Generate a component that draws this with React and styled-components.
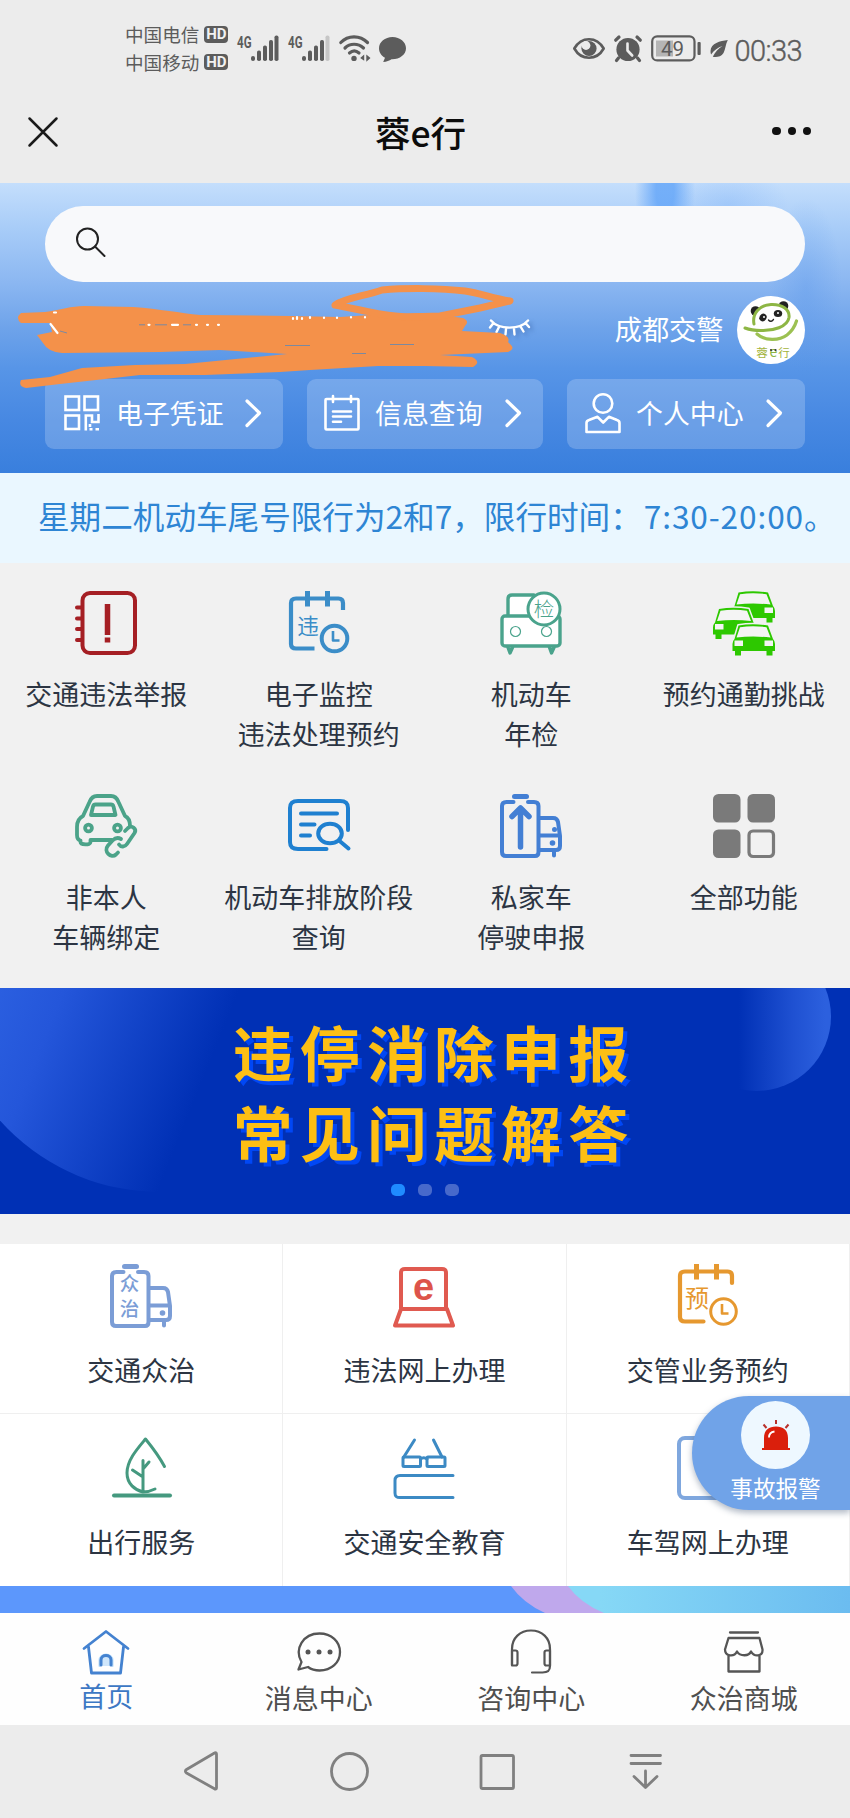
import React from "react";
import styled, { createGlobalStyle } from "styled-components";

const FONT = '"Noto Sans CJK SC", "Noto Sans", sans-serif';

const Global = createGlobalStyle`
  * { box-sizing: border-box; }
  body { margin: 0; background: #ececec; font-family: ${FONT}; }
  svg { display: block; overflow: visible; flex: none; }
`;

const Screen = styled.div`
  width: 850px;
  height: 1818px;
  display: flex;
  flex-direction: column;
  overflow: hidden;
  background: #f1f1f1;
`;

/* ---------- status bar ---------- */
const StatusBar = styled.div`
  height: 98px;
  flex: none;
  display: flex;
  justify-content: space-between;
  padding: 0 48px 0 125px;
  background: #ececec;
  color: #5c5c5c;
`;
const StatusLeft = styled.div`
  display: flex;
  align-items: flex-start;
`;
const Carriers = styled.div`
  display: flex;
  flex-direction: column;
  padding-top: 20px;
  margin-right: 9px;
`;
const Carrier = styled.div`
  height: 27.5px;
  display: flex;
  align-items: center;
  gap: 5px;
  font-size: 18.6px;
  line-height: 27px;
  white-space: nowrap;
`;
const HdBadge = styled.span`
  width: 24px;
  height: 16.5px;
  margin-top: 1px;
  border-radius: 4px;
  background: #5c5c5c;
  color: #f2f2f2;
  font: 700 15px/17px Roboto, sans-serif;
  text-align: center;
`;
const StatusIcons = styled.div`
  display: flex;
  padding-top: 34px;
  gap: ${(p) => p.$gap}px;
`;
const Clock = styled.div`
  padding-top: 33px;
  margin-left: -2px;
  font: 300 29px/36px Roboto, sans-serif;
  -webkit-text-stroke: 0.4px #5c5c5c;
  letter-spacing: -0.6px;
  white-space: nowrap;
`;

/* ---------- title bar ---------- */
const TitleBar = styled.div`
  height: 85px;
  flex: none;
  display: grid;
  grid-template-columns: 200px 1fr 200px;
  align-items: start;
  padding: 0 39px 0 28px;
  background: #ececec;
`;
const CloseSlot = styled.div`
  padding-top: 19px;
`;
const Title = styled.h1`
  margin: 0;
  padding-top: 8px;
  padding-left: 2px;
  text-align: center;
  font-size: 35.5px;
  line-height: 52px;
  font-weight: 500;
  color: #0c0c0c;
`;
const MoreSlot = styled.div`
  padding-top: 29px;
  display: flex;
  justify-content: flex-end;
  gap: 7px;
`;
const MoreDot = styled.span`
  width: 8.2px;
  height: 8.2px;
  border-radius: 50%;
  background: #111;
`;

/* ---------- hero ---------- */
const Hero = styled.section`
  position: relative;
  height: 290px;
  flex: none;
  padding: 23px 45px 0;
  background:
    radial-gradient(ellipse 30px 70px at 665px 8px, rgba(90, 160, 248, 0.75) 30%, transparent),
    radial-gradient(ellipse 60px 40px at 728px 22px, rgba(120, 175, 248, 0.35), transparent),
    radial-gradient(ellipse 36px 90px at 806px 105px, rgba(80, 145, 235, 0.3), transparent),
    linear-gradient(180deg, #c4defc 0%, #a9cdf8 15%, #8ab6f1 35%, #6ea3ea 50%, #5795e7 64%, #4788e2 82%, #397fdd 100%);
`;
const SearchBox = styled.div`
  height: 75.5px;
  border-radius: 38px;
  padding: 21px 31px;
  background: #f8f9fb;
`;
const UserRow = styled.div`
  height: 97px;
  display: flex;
  justify-content: flex-end;
  align-items: flex-start;
  padding-top: 14.5px;
`;
const LashSlot = styled.div`
  padding-top: 21.5px;
  margin-right: 85px;
`;
const OrgName = styled.div`
  padding-top: 12.5px;
  margin-right: 13.5px;
  font-size: 27.2px;
  line-height: 38px;
  color: #fff;
`;
const Avatar = styled.div`
  width: 68px;
  height: 68px;
  border-radius: 50%;
  background: #fff;
`;
const QuickRow = styled.div`
  display: grid;
  grid-template-columns: 238px 236px 238px;
  gap: 24px;
`;
const QuickButton = styled.div`
  height: 70px;
  border-radius: 9px;
  background: rgba(255, 255, 255, 0.2);
  display: flex;
  align-items: center;
  padding: 0 0 1.5px ${(p) => p.$pad}px;
  color: #fff;
`;
const QuickLabel = styled.span`
  margin-left: ${(p) => p.$gap}px;
  width: ${(p) => 144.5 - p.$gap}px;
  font-size: 26.9px;
  line-height: 38px;
  white-space: nowrap;
`;
const Scribble = styled.svg`
  position: absolute;
  left: 0;
  top: 0;
  pointer-events: none;
`;

/* ---------- notice ---------- */
const Notice = styled.div`
  height: 89.5px;
  flex: none;
  padding: 19px 0 0 38px;
  background: #eaf7ff;
`;
const NoticeText = styled.div`
  white-space: nowrap;
  font-size: 31.6px;
  line-height: 46px;
  color: #2e85d4;
`;
const Hours = styled.span`
  margin-left: 2px;
  letter-spacing: 0.9px;
`;

/* ---------- services ---------- */
const ServiceGrid = styled.section`
  height: 425.5px;
  flex: none;
  display: grid;
  grid-template-columns: repeat(4, 212.5px);
  grid-auto-rows: 203px;
  padding-top: 28.5px;
  background: #f1f1f1;
`;
const Service = styled.div`
  display: flex;
  flex-direction: column;
  align-items: center;
`;
const Label = styled.div`
  margin-top: ${(p) => p.$top}px;
  text-align: center;
  white-space: pre;
  font-size: 27px;
  line-height: 40.3px;
  color: ${(p) => p.$color || "#2c3543"};
`;

/* ---------- banner ---------- */
const Banner = styled.section`
  position: relative;
  height: 226px;
  flex: none;
  overflow: hidden;
  display: flex;
  flex-direction: column;
  align-items: center;
  padding-top: 22.5px;
  background: #0030b5;
`;
const Orb = styled.div`
  position: absolute;
  left: ${(p) => p.$x}px;
  top: ${(p) => p.$y}px;
  width: ${(p) => p.$size}px;
  height: ${(p) => p.$size}px;
  border-radius: 50%;
  background: ${(p) => p.$fill};
`;
const BannerLine = styled.div`
  position: relative;
  height: 80px;
  padding-left: 18px;
  font-size: 60px;
  line-height: 80px;
  font-weight: 700;
  letter-spacing: 7.1px;
  color: #fdbf14;
  text-shadow: 4px 4px 0 #0047f5;
  white-space: nowrap;
`;
const Dots = styled.div`
  position: relative;
  display: flex;
  gap: 13px;
  margin-top: 13px;
`;
const Dot = styled.span`
  width: 14px;
  height: 12px;
  border-radius: 5px;
  background: ${(p) => (p.$on ? "#1f8bff" : "#4769cb")};
`;

/* ---------- tiles ---------- */
const TileArea = styled.section`
  position: relative;
  height: 372px;
  flex: none;
  padding-top: 29.5px;
`;
const TileGrid = styled.div`
  display: grid;
  grid-template-columns: 283.3px 283.3px 283.4px;
  grid-template-rows: 170px 172.5px;
`;
const Tile = styled.div`
  display: flex;
  flex-direction: column;
  align-items: center;
  padding-top: ${(p) => p.$top}px;
  background: #fff;
  border-right: 1.5px solid #efefef;
  border-bottom: ${(p) => (p.$line ? "1.5px solid #efefef" : "0")};
`;
const AlarmTab = styled.div`
  position: absolute;
  right: 0;
  top: 182px;
  width: 158px;
  height: 114px;
  border-radius: 57px 0 0 57px;
  background: #70a3e8;
  box-shadow: 0 3px 6px rgba(60, 80, 110, 0.4);
  display: flex;
  flex-direction: column;
  align-items: center;
  padding: 5px 0 0 9px;
`;
const AlarmDisc = styled.div`
  width: 69px;
  height: 68px;
  border-radius: 50%;
  background: #eef8ff;
  display: flex;
  justify-content: center;
  padding-top: 19px;
`;
const AlarmText = styled.div`
  font-size: 22.6px;
  line-height: 32px;
  margin-top: 2.5px;
  color: #fff;
`;

const Strip = styled.div`
  height: 27px;
  flex: none;
  background: linear-gradient(90deg, #86d8f6 600px, #6bbcf0 850px);
`;

/* ---------- bottom tabs ---------- */
const TabBar = styled.nav`
  height: 112px;
  flex: none;
  display: grid;
  grid-template-columns: repeat(4, 212.5px);
  background: #fefefe;
`;
const Tab = styled.div`
  display: flex;
  flex-direction: column;
  align-items: center;
  padding-top: 14px;
`;
const SystemBar = styled.div`
  height: 93px;
  flex: none;
  display: flex;
  padding: 25px 0 0 180px;
  gap: 105px;
  background: #ececec;
`;

/* ---------- icons ---------- */
const Icon = ({ w = 62, h = 64, color, sw = 4, children, ...rest }) => (
  <svg width={w} height={h} viewBox={`0 0 ${w} ${h}`} fill="none" stroke={color} strokeWidth={sw} strokeLinecap="round" strokeLinejoin="round" {...rest}>
    {children}
  </svg>
);
const Glyph = ({ x, y, size, color, weight = 400, family = FONT, children }) => (
  <text x={x} y={y} fontSize={size} fill={color} stroke="none" fontWeight={weight} fontFamily={family} textAnchor="middle">
    {children}
  </text>
);

const Signal = ({ weak }) => (
  <svg width="42" height="28" viewBox="0 0 42 28" fill="#5c5c5c">
    <text x="0" y="13.5" fontFamily="Roboto, sans-serif" fontWeight="700" fontSize="17" textLength="14.5" lengthAdjust="spacingAndGlyphs">4G</text>
    <rect x="14" y="22" width="4" height="5" rx="2" />
    <rect x="20" y="16.5" width="4" height="10.5" rx="1.8" />
    <rect x="26" y="11.5" width="4" height="15.5" rx="1.8" />
    <rect x="32" y="6" width="4" height="21" rx="1.8" />
    <rect x="37.5" y="1.5" width="4" height="25.5" rx="1.8" fill={weak ? "#c6c6c6" : "#5c5c5c"} />
  </svg>
);
const Wifi = () => (
  <Icon w={31} h={27} color="#5c5c5c" sw={3.2}>
    <path d="M1.8 8.5C9 1 21 1 28.5 8.5M6 14C11 9 19 9 24.500 14M10.5 19c3-2.6 6.5-2.6 9.5 0" />
    <circle cx="15" cy="24.4" r="2.7" fill="#5c5c5c" stroke="none" />
    <path d="M21.2 24l4-3.4v6.2zM31.5 24l-4.2-3.6v7.4z" fill="#5c5c5c" stroke="none" />
  </Icon>
);
const Bubble = () => (
  <Icon w={27} h={28} color="none">
    <path d="M13.5 3C6 3 0 8 0 14.2c0 4 2.3 7.5 6 9.5L4.2 28c3.300-.3 6.3-1.5 8.3-2.8C20.5 25.5 27 20.7 27 14.2 27 8 21 3 13.5 3z" fill="#5c5c5c" />
  </Icon>
);
const Eye = () => (
  <Icon w={32} h={28} color="#5c5c5c" sw={2.6}>
    <path d="M1.3 14.5C5 8 10.5 5.2 16 5.2s11 2.8 14.7 9.3C27 21 21.5 23.8 16 23.8S5 21 1.3 14.5z" />
    <circle cx="16" cy="14.5" r="7.6" fill="#5c5c5c" stroke="none" />
    <circle cx="13" cy="11.5" r="4.4" fill="#ececec" stroke="none" />
  </Icon>
);
const AlarmClock = () => (
  <Icon w={28} h={28} color="#5c5c5c" sw={3.2}>
    <circle cx="14" cy="15.5" r="11.6" fill="#5c5c5c" stroke="none" />
    <path d="M1.7 6.2L5 3M26.3 6.2L23 3M4.5 24l-2 2.5M23.5 24l2 2.5" />
    <path d="M13.5 9.5v7l4.7 5" stroke="#ececec" strokeWidth="2.6" />
  </Icon>
);
const Battery = () => (
  <Icon w={50} h={28} color="#5c5c5c" sw={2.2}>
    <rect x="1.2" y="2.4" width="42.3" height="24" rx="5" />
    <rect x="5" y="6.5" width="17" height="16" fill="#b5b5b5" stroke="none" />
    <rect x="46.5" y="8" width="3.2" height="13" rx="1" fill="#5c5c5c" stroke="none" />
    <Glyph x={21.5} y={22} size={20.5} color="#5c5c5c" family="Roboto, sans-serif">49</Glyph>
  </Icon>
);
const Leaf = () => (
  <Icon w={18} h={28} color="none">
    <path d="M17.8 6C10 7 1 9 .5 17c0 1.5.2 2.5.6 3.5C4 16 8 13.5 12.5 12 8.5 14.5 5 18 2.8 22.700 6 23.5 11 23 13.5 19 15.5 15.5 15.5 10 17.8 6z" fill="#5c5c5c" />
  </Icon>
);

const PandaLogo = () => (
  <svg width="68" height="68" viewBox="0 0 68 68" fill="none">
    <circle cx="18.5" cy="15" r="4.8" fill="#222" />
    <circle cx="46.5" cy="10" r="4.8" fill="#222" />
    <path d="M17 28C15 18 22 9 34 8.500c11-.5 19 5 18 13C50.500 31 36 35 24 34.500 17 34.500 12 33.500 8 32" fill="#fff" stroke="#8db644" strokeWidth="3" strokeLinecap="round" />
    <path d="M20 38c8 7 22 7 30 1 5-4 8-9 9.500-14" stroke="#9cc152" strokeWidth="3.2" strokeLinecap="round" />
    <ellipse cx="26" cy="21.500" rx="3.4" ry="4" fill="#222" transform="rotate(35 26 21.5)" />
    <ellipse cx="41" cy="17.5" rx="4.2" ry="3.6" fill="#222" />
    <circle cx="27" cy="21" r="1" fill="#fff" />
    <circle cx="41" cy="17" r="1" fill="#fff" />
    <path d="M31.500 24c1.500 2 4 1.500 5-.6" stroke="#222" strokeWidth="1.3" strokeLinecap="round" />
    <Glyph x={25} y={60.5} size={11.5} color="#a3b43c">蓉</Glyph>
    <Glyph x={36.3} y={60.5} size={14} color="#8db644">e</Glyph>
    <Glyph x={47} y={60.5} size={11.5} color="#a3b43c">行</Glyph>
    <circle cx="34" cy="54" r="1.1" fill="#333" />
    <circle cx="38.5" cy="54" r="1.1" fill="#333" />
  </svg>
);
const Lash = () => (
  <Icon w={41} h={18} color="#fff" sw={2.4} style={{ filter: "drop-shadow(3px 3px 2px rgba(40,80,150,.4))" }}>
    <path d="M2 2.500C10 12 31 12 39 2.500M4.500 5L1 9.500M10 9l-2.500 5M17 11l-.5 5.500M25 11l.5 5.500M31.500 8.500l3 5M36.500 5l3.500 4" />
  </Icon>
);
const Qr = () => (
  <Icon w={36} h={36} color="#fff" sw={2.6} strokeLinecap="butt" strokeLinejoin="miter">
    <rect x="1.5" y="1.5" width="13.5" height="13.5" />
    <rect x="20.5" y="1.5" width="13.5" height="13.5" />
    <rect x="1.5" y="20.5" width="13.5" height="13.5" />
    <path d="M21.8 35.500V20.500h6.200v6.500h6.500v-8M26 29v3M25.5 34.200h3M31.500 34.200h3.500" />
  </Icon>
);
const ListIcon = () => (
  <Icon w={36} h={36} color="#fff" sw={2.6}>
    <rect x="1.5" y="4" width="33" height="30.5" rx="1" />
    <path d="M9 1v6M27 1v6M9 16.5h18M9 21.5h18M9 26.8h8" />
  </Icon>
);
const Person = () => (
  <Icon w={36} h={40} color="#fff" sw={2.6}>
    <circle cx="18" cy="10.5" r="9.3" />
    <path d="M1.500 39V30c0-1.500 1-2.500 2.500-3l8.500-3.200 5.700 5.700 5.700-5.700L32 27c1.500.5 2.500 1.500 2.500 3v9z" />
  </Icon>
);
const Chevron = () => (
  <Icon w={16} h={28} color="#fff" sw={3.2}>
    <path d="M2 2l12.500 12L2 26.500" />
  </Icon>
);

const Report = () => (
  <Icon color="#a51f24">
    <rect x="7.5" y="2" width="52.5" height="60" rx="7.5" />
    <path d="M2 16.500h5M2 27.500h5M2 38h5M2 49h5" />
    <path d="M32.500 13v31M32.500 46.500v5" strokeWidth="5.5" strokeLinecap="butt" />
  </Icon>
);
const Calendar = ({ color, char, thin }) => (
  <Icon color={color}>
    <path d="M55 19V12c0-3-1.500-4.500-4.500-4.500H8C4.500 7.500 3 9 3 12v41c0 3 1.500 4.500 5 4.500h18.500" strokeWidth={4.2} strokeLinecap={thin ? "round" : "butt"} />
    <path d="M19.500 0v15.500M39.500 0v15.500" strokeWidth="5" strokeLinecap="butt" />
    <circle cx="46.5" cy="47.5" r="12.8" strokeWidth={thin ? 3 : 4} />
    <path d="M45 40v9.500h6.500" strokeWidth="2.6" strokeLinecap="butt" />
    <Glyph x={20} y={42.5} size={thin ? 24 : 21.5} color={color}>{char}</Glyph>
  </Icon>
);
const Inspect = () => (
  <Icon color="#4aa38c" sw={3.4}>
    <path d="M8 26V8c0-3 1.500-4 4-4h22v22z" fill="#fff" />
    <rect x="2" y="25" width="58" height="30" rx="3" fill="#fff" />
    <path d="M8 56.500l2 5.500 2.500-5.500M49.500 56.500l2 5.500 2.500-5.500" />
    <circle cx="15.5" cy="40.5" r="5" strokeWidth="1.2" />
    <circle cx="46.5" cy="40.5" r="5" strokeWidth="1.2" />
    <circle cx="44" cy="18" r="16" fill="#fff" strokeWidth="3" />
    <Glyph x={44} y={25.5} size={20.5} color="#4aa38c" weight={300}>检</Glyph>
  </Icon>
);
const Taxi = ({ x, y }) => (
  <g transform={`translate(${x} ${y})`}>
    <path d="M6.500 1.500Q21 -1 36 1.500L41 15q2 2 2 5v7h-2.500v4.500h-6V27H9v4.500H3V27H.5v-7q0-3 2-5z" fill="#2dc800" stroke="#f1f1f1" strokeWidth="3" paintOrder="stroke" />
    <path d="M8 3.200Q21 1.200 34.500 3.200L38.500 13.500q-17.500-1.800-34 0z" fill="#f4f4f4" />
    <rect x="2.5" y="16.5" width="8.500" height="5.500" fill="#f4f4f4" />
    <rect x="32.5" y="16.5" width="8.500" height="5.500" fill="#f4f4f4" />
  </g>
);
const Taxis = () => (
  <svg width="62" height="64" viewBox="0 0 62 64">
    <Taxi x={19} y={0} />
    <Taxi x={-0.5} y={16.5} />
    <Taxi x={19} y={33} />
  </svg>
);
const BindCar = () => (
  <Icon color="#4ba389" sw={3.8}>
    <path d="M55 32c0-5-1.500-8.500-5-10L43.500 8C42 4 40 2 36 2H22c-4 0-6 2-7.500 6L8 22c-4 2-6 6-6 11v8c0 3 1 5 3.500 5.500V48c0 3 10 3.500 10 0v-2H37" />
    <path d="M16 21l2-8.500c.4-1.500 1-2 2.500-2H36c1.500 0 2 .5 2.500 2L40.500 21z" />
    <circle cx="13.5" cy="34" r="3.4" />
    <circle cx="42.5" cy="34" r="3.4" />
    <path d="M50 37l3-3c4-3.500 9 1 6.500 5l-7.500 11c-2 3-6 3.500-8 .5M46 45c-2.500-1.500-6-1-8.500 1.500l-4.500 5c-5 6 3 13.500 8 9l2-2" />
  </Icon>
);
const Stage = () => (
  <Icon color="#1f80d0">
    <path d="M60 36V14c0-5-2.500-7-8-7H10C4.500 7 2 9 2 14v34c0 5 2.500 7 8 7h28.500" />
    <path d="M13 19.500h36M13 30.500h13.500M13 41.500h9" />
    <ellipse cx="42" cy="39.5" rx="11.8" ry="9.800" />
    <path d="M51 46.500l9.500 8" />
  </Icon>
);
const ParkCar = ({ color, children }) => (
  <Icon color={color} sw={4}>
    <path d="M13.500 8H6.500C3.500 8 2 9 2 12v46c0 2.500 1 4 4 4h29c2.500 0 3.500-1.500 3.500-4V12c0-3-1.500-4-4.500-4h-6" />
    <path d="M14.500 2.500h12" strokeWidth="5" />
    <path d="M39.500 24H53c3.500 0 4.500 1.500 5 4l2 14v10c0 2.500-1.500 4-4 4H39.500M39.500 41.500H59M54 57v4.500" />
    <circle cx="52.5" cy="49" r="2.8" fill={color} stroke="none" />
    {children}
  </Icon>
);
const AllIcon = () => (
  <svg width="62" height="64" viewBox="0 0 62 64" fill="#7a7a7a">
    <rect width="27.5" height="28.5" rx="5.5" />
    <rect x="34.5" width="27.5" height="28.5" rx="5.5" />
    <rect y="35.5" width="27.5" height="28.5" rx="5.5" />
    <rect x="36" y="37" width="24.5" height="25.5" rx="4" fill="none" stroke="#7a7a7a" strokeWidth="3.2" />
  </svg>
);
const Laptop = () => (
  <Icon color="#e05a50">
    <path d="M8 44V9c0-3 1-4 4-4h37c3 0 4 1 4 4v35M8 45h46l6 16.500H2z" />
    <Glyph x={30.5} y={35.5} size={38} color="#dd544a" weight={700} family='"Liberation Sans", sans-serif'>e</Glyph>
  </Icon>
);
const LeafTree = () => (
  <Icon color="#45997f" sw={3}>
    <path d="M54.500 30.500C50 22 42 11 35.500 3 28 12 17 24 17 37c0 11 8 17 16 19 4 0 8-1 12-3M33 56V24.500M33 41L22.500 34M33 33l6-7" />
    <path d="M4 59.500h56" strokeWidth="4" />
  </Icon>
);
const Study = () => (
  <Icon color="#3c8ac4" sw={3}>
    <path d="M21.500 4l-11 17.500M40.500 4l8.500 17" />
    <rect x="10" y="21" width="17.5" height="9.500" rx="1" />
    <rect x="34" y="21" width="18" height="9.500" rx="1" />
    <path d="M27.500 23c2-1.500 4.500-1.500 6.500 0M60 39.500H7c-3.500 0-5 1.500-5 5V57c0 3.500 1.500 4.500 5 4.500h53" />
  </Icon>
);
const DeskFrame = () => (
  <Icon color="#7fa7de">
    <rect x="2" y="2" width="58" height="60" rx="6" />
  </Icon>
);
const Siren = () => (
  <svg width="28" height="31" viewBox="0 0 28 31" fill="#da1f0c">
    <path d="M2 28V18C2 10 7 6.500 14 6.500S26 10 26 18v10h2v2H0v-2z" />
    <path d="M14 0v4M1.500 4.500l3 3.500M26.500 4.500l-3 3.500" stroke="#b8322c" strokeWidth="2" />
    <path d="M7 17.500c0-3 2-5.500 5.500-6" stroke="#fff" strokeWidth="1.8" fill="none" />
  </svg>
);
const Home = () => (
  <Icon w={48} h={48} color="#4482d0" sw={2.8}>
    <path d="M2 21.500L24 4.500l22 17M6.500 20L9.500 46h29l3-26" />
    <path d="M17.500 39v-5.500c0-8 13-8 13 0V39" strokeWidth="2" fill="#cfe6fb" stroke="#b9dcfa" />
    <path d="M19 38v-5c0-6 10-6 10 0v5" strokeWidth="3" />
  </Icon>
);
const Message = () => (
  <Icon w={48} h={48} color="#555" sw={2.3}>
    <path d="M3.500 42.500l3-7.500C-1 22 8 6.500 24.500 6.500c12 0 20.500 8 20.500 18.500S36.500 43.500 24.500 43.500c-4.500 0-8-1-11.500-3.500z" />
    <g fill="#555" stroke="none">
      <circle cx="13" cy="25" r="2.5" />
      <circle cx="24" cy="25" r="2.5" />
      <circle cx="35" cy="25" r="2.5" />
    </g>
  </Icon>
);
const Headset = () => (
  <Icon w={48} h={48} color="#555" sw={2.2}>
    <path d="M5 38V22C5 11 13 3.500 24 3.500S43 11 43 22v17c0 5-2.500 6.500-7.500 6.500H25" />
    <path d="M5 23.500h3.500q2 0 2 2v11q0 2-2 2H5zM43 23.500h-3.500q-2 0-2 2v11q0 2 2 2H43z" />
  </Icon>
);
const Shop = () => (
  <Icon w={48} h={48} color="#555" sw={2.3}>
    <path d="M10 5.500h28M8.500 11h31l3 11.500c.5 7-8 8-11.500 2-2 5-11 5-14 0-3 6-12 5-12-2zM8.500 29v15.500h31V29" />
  </Icon>
);

const QUICK = [
  { icon: <Qr />, label: "电子凭证", pad: 19, gap: 16 },
  { icon: <ListIcon />, label: "信息查询", pad: 17, gap: 15 },
  { icon: <Person />, label: "个人中心", pad: 18, gap: 15 },
];
const SERVICES = [
  { icon: <Report />, label: "交通违法举报" },
  { icon: <Calendar color="#3b8dc8" char="违" />, label: "电子监控\n违法处理预约" },
  { icon: <Inspect />, label: "机动车\n年检" },
  { icon: <Taxis />, label: "预约通勤挑战" },
  { icon: <BindCar />, label: "非本人\n车辆绑定" },
  { icon: <Stage />, label: "机动车排放阶段\n查询" },
  {
    icon: (
      <ParkCar color="#437fd4">
        <path d="M20.500 53V15M12 22.500l8.500-8.500 8.500 8.500" strokeWidth="5.5" />
        <circle cx="54.5" cy="35.5" r="2.5" fill="#437fd4" stroke="none" />
      </ParkCar>
    ),
    label: "私家车\n停驶申报",
  },
  { icon: <AllIcon />, label: "全部功能" },
];
const TILES = [
  {
    icon: (
      <ParkCar color="#7b9dd6">
        <Glyph x={19.5} y={26.5} size={19.5} color="#7b9dd6" weight={500}>众</Glyph>
        <Glyph x={19.5} y={52} size={19.5} color="#7b9dd6" weight={500}>治</Glyph>
      </ParkCar>
    ),
    label: "交通众治",
  },
  { icon: <Laptop />, label: "违法网上办理" },
  { icon: <Calendar color="#e6982f" char="预" thin />, label: "交管业务预约" },
  { icon: <LeafTree />, label: "出行服务" },
  { icon: <Study />, label: "交通安全教育" },
  { icon: <DeskFrame />, label: "车驾网上办理" },
];
const TABS = [
  { icon: <Home />, label: "首页", on: true },
  { icon: <Message />, label: "消息中心" },
  { icon: <Headset />, label: "咨询中心" },
  { icon: <Shop />, label: "众治商城" },
];

export default function App() {
  return (
    <Screen>
      <Global />
      <StatusBar>
        <StatusLeft>
          <Carriers>
            <Carrier>中国电信<HdBadge>HD</HdBadge></Carrier>
            <Carrier>中国移动<HdBadge>HD</HdBadge></Carrier>
          </Carriers>
          <StatusIcons $gap={9}>
            <Signal />
            <Signal weak />
            <Wifi />
            <Bubble />
          </StatusIcons>
        </StatusLeft>
        <StatusLeft>
          <StatusIcons $gap={9}>
            <Eye />
            <AlarmClock />
            <Battery />
            <Leaf />
            <span />
          </StatusIcons>
          <Clock>00:33</Clock>
        </StatusLeft>
      </StatusBar>

      <TitleBar>
        <CloseSlot>
          <Icon w={30} h={30} color="#1a1a1a" sw={2.5}>
            <path d="M1.500 1.500l27 27M28.500 1.500l-27 27" />
          </Icon>
        </CloseSlot>
        <Title>蓉e行</Title>
        <MoreSlot>
          <MoreDot />
          <MoreDot />
          <MoreDot />
        </MoreSlot>
      </TitleBar>

      <Hero>
        <SearchBox>
          <Icon w={30} h={32} color="#222" sw={2}>
            <circle cx="11.5" cy="12" r="10.5" />
            <path d="M19 19.500l9.500 9.500" />
          </Icon>
        </SearchBox>
        <UserRow>
          <LashSlot><Lash /></LashSlot>
          <OrgName>成都交警</OrgName>
          <Avatar><PandaLogo /></Avatar>
        </UserRow>
        <QuickRow>
          {QUICK.map((q) => (
            <QuickButton key={q.label} $pad={q.pad}>
              {q.icon}
              <QuickLabel $gap={q.gap}>{q.label}</QuickLabel>
              <Chevron />
            </QuickButton>
          ))}
        </QuickRow>
        <Scribble width="850" height="290" viewBox="0 183 850 290">
          <path
            d="M21 313 L45 312 C60 310 72 306 84 306 L133 307 C160 309 180 313 200 315 L290 316 L340 317 L385 314 L425 313 L463 318 Q470 321 465 326 L462 331 L500 333 Q511 337 508 342 L511 345 Q515 349 508 352 L440 355 L472 357 Q482 362 473 367 L425 366 L378 366 L310 370 L280 372 L205 375 L140 375 L105 379 L60 384 L26 388 Q18 387 21 380 L50 377 L82 368 L135 365 L185 364 L287 354 L220 350 L160 352 L62 353 Q48 352 43 343 L37 335 L52 332 L50 323 L21 323 Q15 318 21 313Z"
            fill="#f4914a"
          />
          <path d="M407 317 C385 316 375 313 360 310 L335 305 C345 298 365 296 382 290 C405 288 440 288 465 291 C480 293 492 298 510 301 L480 308 L440 316 L407 317" fill="none" stroke="#f4914a" strokeWidth="7" strokeLinejoin="round" strokeLinecap="round" />
          <g stroke="#fff" strokeWidth="2.2" strokeLinecap="round" fill="none">
            <path d="M50.500 324l7 9M54 312.500h2M148.500 324.800h1M172 324.800h6M196 324.800h1M207 324.800h1M218 324.800h1" />
            <path d="M293 318v1M297 317v2M302 318v1M310 317v1M324 317.500v.5M337 317.500v.5M351 317v.5M365 317v.5" />
          </g>
          <path d="M60 331l7 2M139 324.800h6M155 324.800h12M183 324.800h8M285 345.500h25M352 353.500h14M390 344.500h24" stroke="#7b89a0" strokeWidth="1" fill="none" />
        </Scribble>
      </Hero>

      <Notice>
        <NoticeText>
          星期二机动车尾号限行为2和7，限行时间：<Hours>7:30-20:00</Hours>。
        </NoticeText>
      </Notice>

      <ServiceGrid>
        {SERVICES.map((s) => (
          <Service key={s.label}>
            {s.icon}
            <Label $top={19}>{s.label}</Label>
          </Service>
        ))}
      </ServiceGrid>

      <Banner>
        <Orb $x={-55} $y={-226} $size={430} $fill="linear-gradient(112deg, #2d62e2 20%, #2456da 35%, #0030b5 64%)" />
        <Orb $x={682} $y={-46} $size={149} $fill="linear-gradient(270deg, #2c60de 4%, #1f51d2 25%, #0030b5 62%)" />
        <BannerLine>违停消除申报</BannerLine>
        <BannerLine>常见问题解答</BannerLine>
        <Dots>
          <Dot $on />
          <Dot />
          <Dot />
        </Dots>
      </Banner>

      <TileArea>
        <TileGrid>
          {TILES.map((t, i) => (
            <Tile key={t.label} $top={i < 3 ? 20.5 : 22.5} $line={i < 3}>
              {t.icon}
              <Label $top={i < 3 ? 21.5 : 22}>{t.label}</Label>
            </Tile>
          ))}
        </TileGrid>
        <AlarmTab>
          <AlarmDisc><Siren /></AlarmDisc>
          <AlarmText>事故报警</AlarmText>
        </AlarmTab>
      </TileArea>

      <Strip>
        <svg width="850" height="27" viewBox="0 0 850 27">
          <path d="M500 0h68q12 17 36 27H500z" fill="#bfa8ec" />
          <path d="M0 0h511q12 17 34 27H0z" fill="#5c97fc" />
        </svg>
      </Strip>

      <TabBar>
        {TABS.map((t) => (
          <Tab key={t.label}>
            {t.icon}
            <Label $top={t.on ? 0.5 : 2.5} $color={t.on ? "#3d78c4" : "#4f4f4f"}>{t.label}</Label>
          </Tab>
        ))}
      </TabBar>

      <SystemBar>
        <Icon w={43} h={43} color="#808080" sw={2.8}>
          <path d="M36.500 4v34c0 1-1 1.500-2 .8L6.500 23c-1.500-1-1.500-2.500 0-3.500L34.500 3c1-.7 2-.2 2 1z" />
        </Icon>
        <Icon w={43} h={43} color="#808080" sw={2.8}>
          <circle cx="21.5" cy="21.5" r="18" />
        </Icon>
        <Icon w={43} h={43} color="#808080" sw={2.8}>
          <rect x="5" y="5.5" width="32.5" height="33" rx="1.5" />
        </Icon>
        <Icon w={43} h={43} color="#808080" sw={2.8}>
          <path d="M7 5.500h29.500M7 13.500h29.500M21.500 21v16.500M10 26.500l11.500 11L33 26.500" />
        </Icon>
      </SystemBar>
    </Screen>
  );
}
